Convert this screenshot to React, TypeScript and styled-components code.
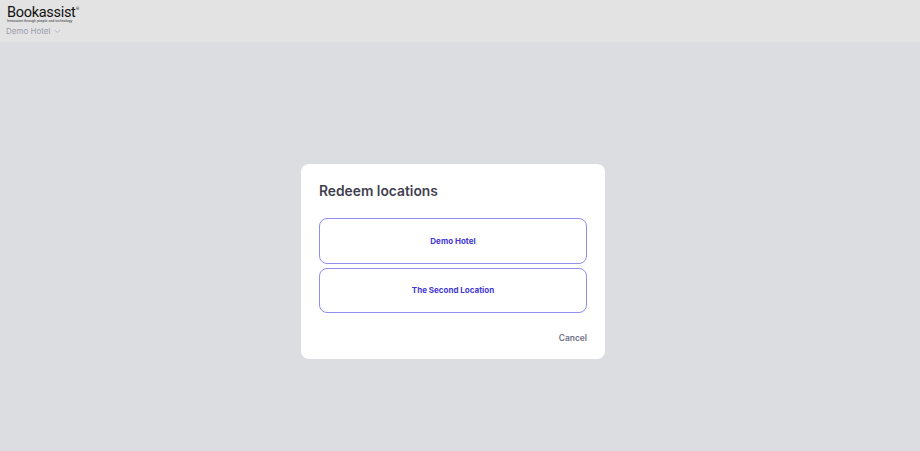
import React from "react";
import styled, { createGlobalStyle } from "styled-components";
import { ChevronDown } from "lucide-react";

const GlobalStyle = createGlobalStyle`
  html, body {
    margin: 0;
    padding: 0;
    height: 100%;
    overflow: hidden;
    font-family: Inter, "Liberation Sans", sans-serif;
  }
  #root {
    height: 100%;
  }
`;

const Page = styled.div`
  height: 451px;
  display: flex;
  flex-direction: column;
  background: #dcdde1;
`;

const Header = styled.header`
  height: 42px;
  box-sizing: border-box;
  flex: none;
  padding: 5px 0 0 6px;
  background: #e3e3e3;
`;

const Logo = styled.div`
  width: 70px;
  height: 19px;
  display: flex;
  flex-direction: column;
  color: #111;
`;

const LogoName = styled.div`
  display: flex;
  align-items: flex-start;
  height: 14px;
  font-family: Roboto, sans-serif;
  font-size: 14.5px;
  font-weight: 400;
  line-height: 15px;
  letter-spacing: -0.3px;
  white-space: nowrap;
  padding-left: 1px;
  sup {
    font-size: 4px;
    line-height: 8px;
    margin: 0 0 0 0.5px;
  }
`;

const LogoTagline = styled.div`
  height: 5px;
  padding-left: 1px;
  font-family: "Liberation Sans", sans-serif;
  font-size: 3.5px;
  line-height: 5px;
  white-space: nowrap;
  color: #333;
`;

const HotelPicker = styled.div`
  display: flex;
  align-items: center;
  gap: 3px;
  margin-top: 1px;
  height: 13px;
  color: #9a9cae;
  font-size: 8px;
  line-height: 13px;
`;

const Main = styled.main`
  flex: 1;
  display: flex;
  align-items: flex-start;
  justify-content: flex-start;
  padding: 122px 0 0 301px;
`;

const Modal = styled.section`
  width: 304px;
  height: 195px;
  box-sizing: border-box;
  padding: 18px 18px 0 18px;
  border-radius: 8px;
  background: #fff;
`;

const Title = styled.h2`
  margin: 0 0 17px;
  height: 19px;
  font-size: 13.8px;
  line-height: 18px;
  font-weight: 600;
  color: #3f3f50;
`;

const LocationList = styled.div`
  display: flex;
  flex-direction: column;
  gap: 4px;
`;

const LocationButton = styled.button`
  height: 45.5px;
  padding: 0;
  border: 1px solid #8f8fef;
  border-radius: 8px;
  background: #fff;
  color: #4238d8;
  font-family: inherit;
  font-size: 8px;
  font-weight: 700;
`;

const Footer = styled.div`
  display: flex;
  justify-content: flex-end;
  margin-top: 19px;
`;

const CancelButton = styled.button`
  padding: 0;
  border: none;
  background: none;
  color: #6f7086;
  font-family: inherit;
  font-size: 8.4px;
  line-height: 12px;
  font-weight: 600;
`;

export default function App() {
  return (
    <Page>
      <GlobalStyle />
      <Header>
        <Logo>
          <LogoName>
            Bookassist<sup>®</sup>
          </LogoName>
          <LogoTagline>Innovation through people and technology</LogoTagline>
        </Logo>
        <HotelPicker>
          Demo Hotel
          <ChevronDown size={9} strokeWidth={1.5} />
        </HotelPicker>
      </Header>
      <Main>
        <Modal>
          <Title>Redeem locations</Title>
          <LocationList>
            <LocationButton>Demo Hotel</LocationButton>
            <LocationButton>The Second Location</LocationButton>
          </LocationList>
          <Footer>
            <CancelButton>Cancel</CancelButton>
          </Footer>
        </Modal>
      </Main>
    </Page>
  );
}
